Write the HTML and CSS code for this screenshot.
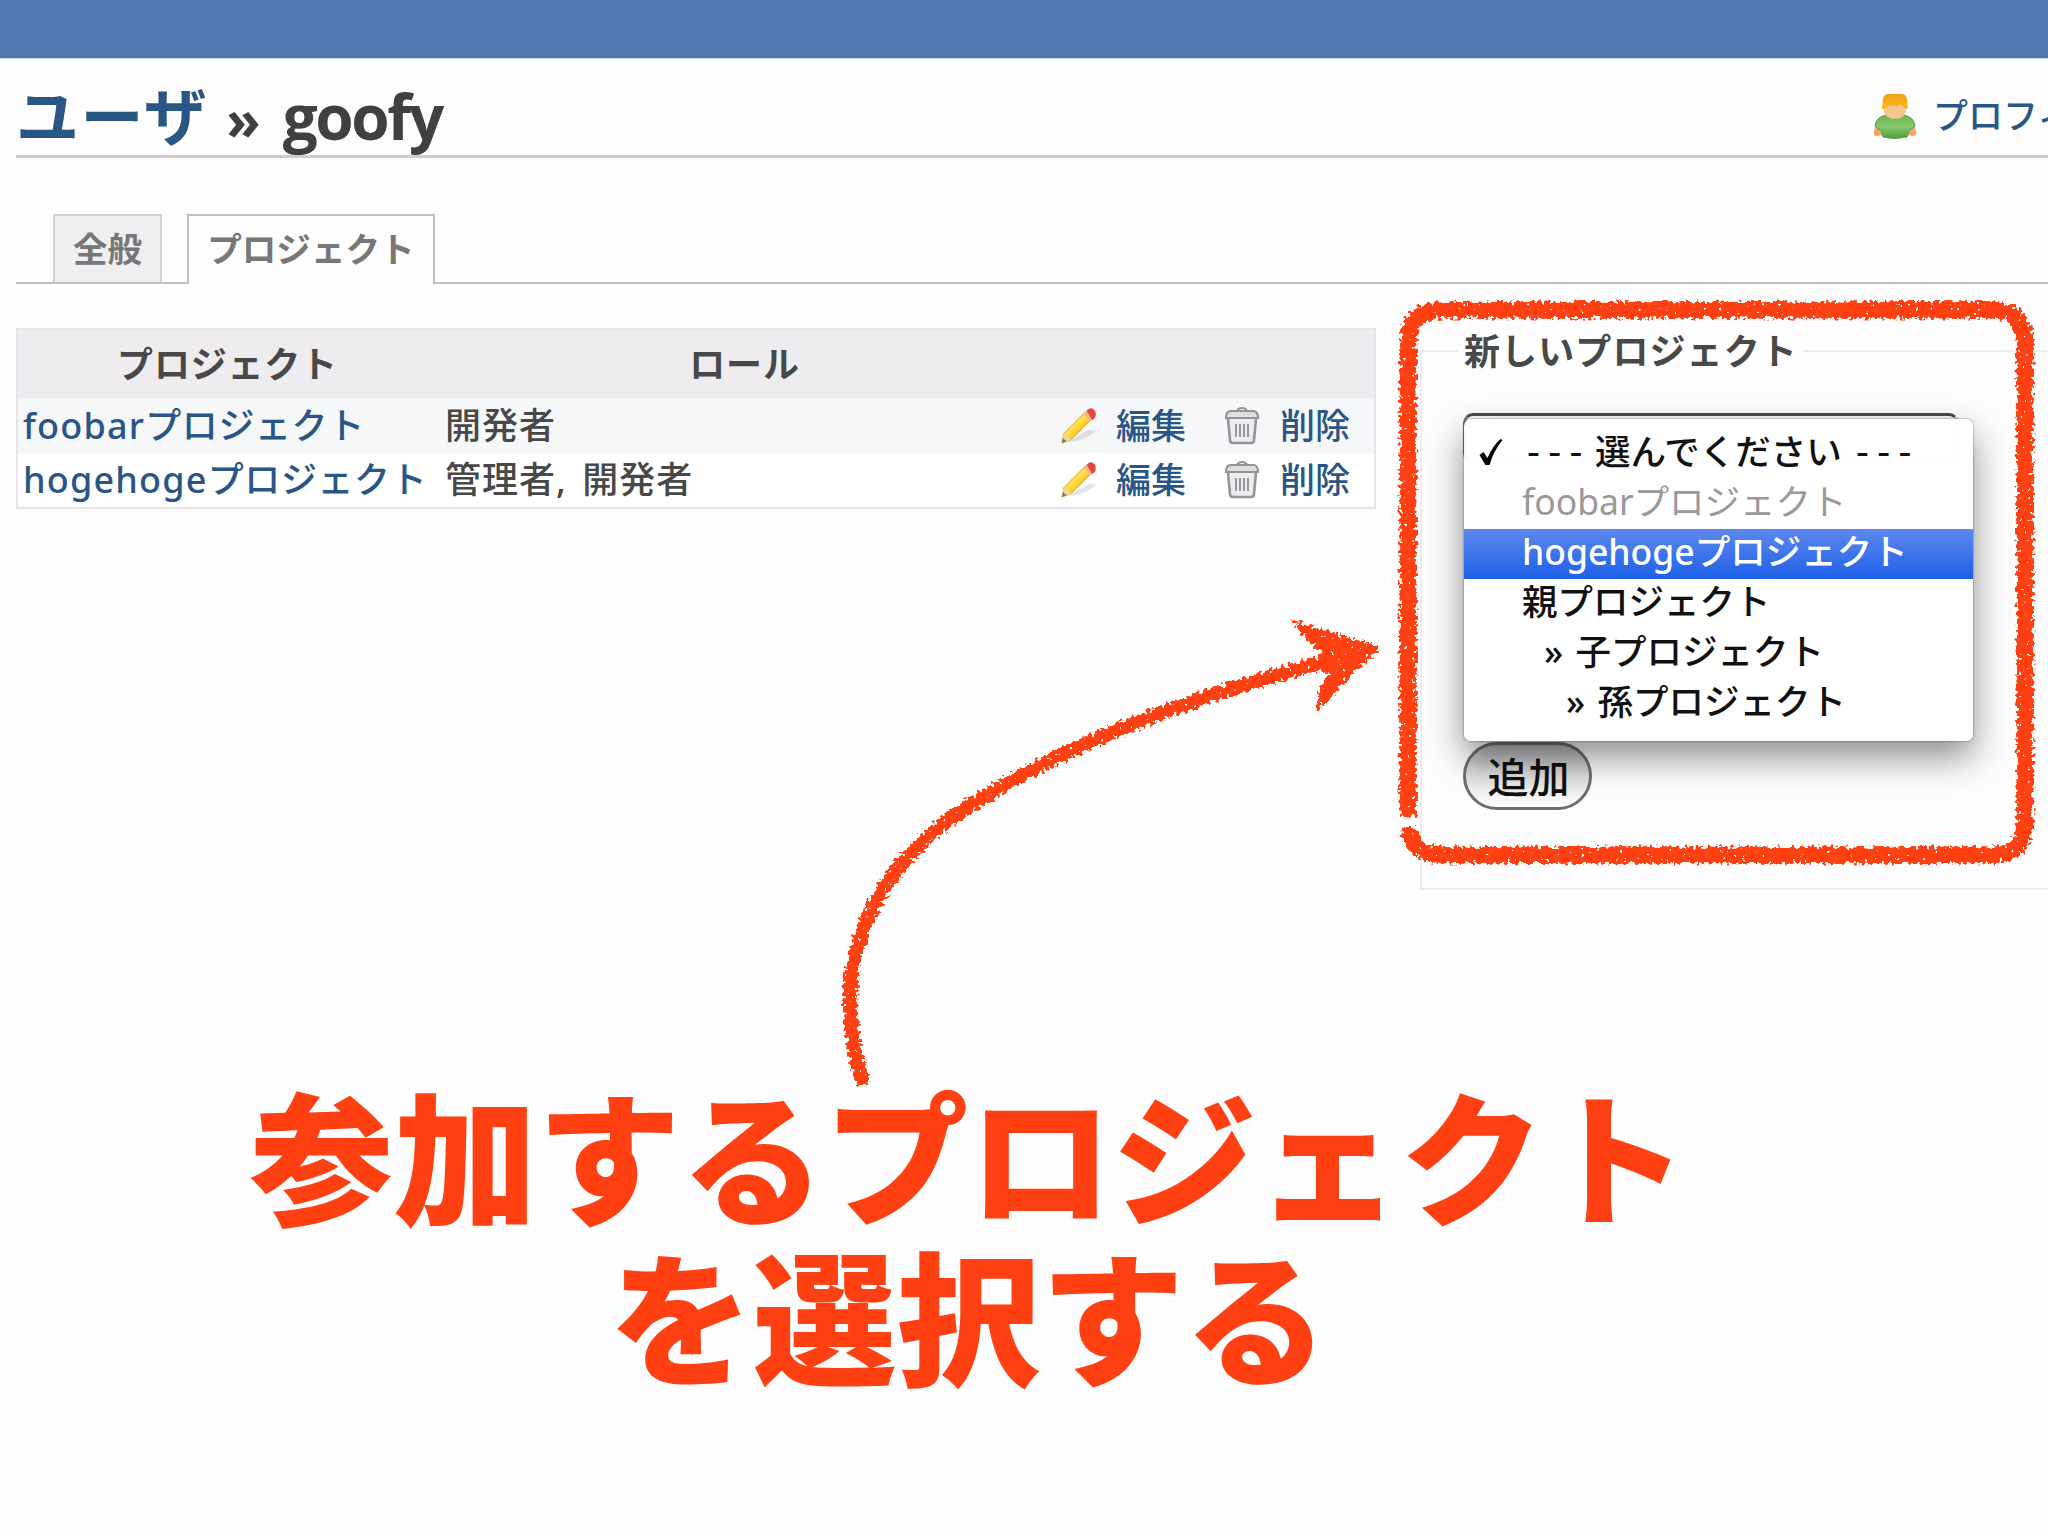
FILE: index.html
```html
<!DOCTYPE html>
<html lang="ja">
<head>
    <meta charset="utf-8">
    <title>ユーザ » goofy</title>
    <link rel="stylesheet" href="styles.css">
</head>
<body>
    <svg class="defs" width="0" height="0">
        <defs>
            <linearGradient id="penBody" x1="0" y1="0" x2="1" y2="1">
                <stop offset="0.2" stop-color="#fff08a"/>
                <stop offset="0.5" stop-color="#ffd93b"/>
                <stop offset="0.8" stop-color="#e89a1c"/>
            </linearGradient>
            <linearGradient id="shirt" x1="0" y1="0" x2="0" y2="1">
                <stop offset="0" stop-color="#6db455"/>
                <stop offset="0.5" stop-color="#86c96c"/>
                <stop offset="1" stop-color="#4f9d3c"/>
            </linearGradient>
            <linearGradient id="hair" x1="0" y1="0" x2="0" y2="1">
                <stop offset="0" stop-color="#f0a020"/>
                <stop offset="1" stop-color="#ffb80c"/>
            </linearGradient>
            <symbol id="pencil" viewBox="0 0 40 40">
                <path d="M8 37 Q24 37 38 25 L30 24 Z" fill="#000" opacity="0.1"/>
                <path d="M2 38 L4 28 L27 5 L34 12 L12 34 Z" fill="url(#penBody)" stroke="#dc9a35" stroke-width="1"/>
                <path d="M2 38 L4 28 L12 34 Z" fill="#e9d9a0"/>
                <path d="M2 38 L3 33 L7 36 Z" fill="#777a50"/>
                <path d="M25 7 L28 4 L36 11 L32 15 Z" fill="#f6b49a"/>
                <path d="M28 4 Q31 0 35 2 Q39 5 37 11 L34 14 Z" fill="#e2483c"/>
            </symbol>
            <symbol id="trash" viewBox="0 0 36 40">
                <path d="M13 4 Q18 0 23 4" fill="none" stroke="#939398" stroke-width="2"/>
                <path d="M4 13 L6 34 Q6 37 9 37 H27 Q30 37 30 34 L32 13" fill="#ececee" stroke="#939398" stroke-width="2.6"/>
                <path d="M2 12 Q2 5 7 5 H29 Q34 5 34 12 Z" fill="#dededf" stroke="#939398" stroke-width="2.2"/>
                <path d="M12 18 V31 M16 18 V31 M20 18 V31 M24 18 V31" stroke="#98989d" stroke-width="2"/>
            </symbol>
            <!-- eats into the stroke edges with noise, clipped to a slightly fattened stroke -->
            <filter id="crayon" filterUnits="userSpaceOnUse" x="0" y="0" width="2048" height="1536" color-interpolation-filters="sRGB">
                <feGaussianBlur in="SourceAlpha" stdDeviation="2.2" result="soft"/>
                <feMorphology in="SourceAlpha" operator="dilate" radius="2" result="limit"/>
                <feTurbulence type="fractalNoise" baseFrequency="0.26" numOctaves="2" seed="7" result="noise"/>
                <feComposite in="soft" in2="noise" operator="arithmetic" k1="0" k2="1" k3="1.8" k4="-1.37" result="mix"/>
                <feComponentTransfer in="mix" result="edge">
                    <feFuncA type="linear" slope="10" intercept="0"/>
                </feComponentTransfer>
                <feComposite in="edge" in2="limit" operator="in" result="grain"/>
                <feFlood flood-color="#ff4013"/>
                <feComposite in2="grain" operator="in"/>
            </filter>
        </defs>
    </svg>

    <div class="top-bar"></div>

    <div class="content">
        <div class="title-row">
            <h2><a href="#">ユーザ</a> <span class="sep">»</span> <span class="login">goofy</span></h2>
            <a href="#" class="profile">
                <svg class="user-icon" viewBox="0 0 46 46">
                    <path d="M3 34 Q0 44 5 43 L11 42 L9 30 Z M43 34 Q46 44 41 43 L35 42 L37 30 Z" fill="#eeaa66"/>
                    <path d="M14 22 Q4 24 3 33 L9 38 L11 44 Q23 47 35 44 L37 38 L43 33 Q42 24 32 22 Z" fill="url(#shirt)" stroke="#569f48" stroke-width="1"/>
                    <path d="M12 12 H34 V19 Q32 26 23 26 Q14 26 12 19 Z" fill="#f3c690"/>
                    <path d="M10 16 L11 5 Q12 1 17 1 H29 Q34 1 35 6 L36 16 L32 15 Q31 12 29 12 Q20 14 15 12 L14 16 Z" fill="url(#hair)"/>
                </svg>
                <span>プロフィール</span>
            </a>
        </div>

        <ul class="tabs">
            <li><a href="#">全般</a></li>
            <li class="selected"><a href="#">プロジェクト</a></li>
        </ul>

        <div class="split">
            <table class="list">
                <thead>
                    <tr>
                        <th class="col-project">プロジェクト</th>
                        <th class="col-roles">ロール</th>
                        <th></th>
                    </tr>
                </thead>
                <tbody>
                    <tr class="odd">
                        <td><a href="#"><span class="latin">foobar</span>プロジェクト</a></td>
                        <td class="roles">開発者</td>
                        <td>
                            <div class="buttons">
                                <a href="#"><svg class="pencil"><use href="#pencil"/></svg>編集</a>
                                <a href="#"><svg class="trash"><use href="#trash"/></svg>削除</a>
                            </div>
                        </td>
                    </tr>
                    <tr>
                        <td><a href="#"><span class="latin">hogehoge</span>プロジェクト</a></td>
                        <td class="roles">管理者, 開発者</td>
                        <td>
                            <div class="buttons">
                                <a href="#"><svg class="pencil"><use href="#pencil"/></svg>編集</a>
                                <a href="#"><svg class="trash"><use href="#trash"/></svg>削除</a>
                            </div>
                        </td>
                    </tr>
                </tbody>
            </table>

            <div class="new-project">
                <div class="legend">新しいプロジェクト</div>
                <div class="select">
                    <div class="menu">
                        <div class="option"><svg class="check" viewBox="0 0 24 28"><path d="M1 17 L5 14 L9 20 Q14 8 22 1 L24 2 Q15 13 11 27 L7 27 Z"/></svg><span class="dashes">---</span> 選んでください <span class="dashes">---</span></div>
                        <div class="option disabled">foobarプロジェクト</div>
                        <div class="option active">hogehogeプロジェクト</div>
                        <div class="option">親プロジェクト</div>
                        <div class="option child">» 子プロジェクト</div>
                        <div class="option grandchild">» 孫プロジェクト</div>
                    </div>
                </div>
                <div class="roles-list">
                    <span class="box"></span>
                    <span class="box"></span>
                    <span class="box"></span>
                </div>
                <button class="add">追加</button>
            </div>
        </div>

        <p class="caption">参加するプロジェクト<br>を選択する</p>
    </div>

    <svg class="marks" viewBox="0 0 2048 1536">
        <g filter="url(#crayon)">
            <path class="stroke" d="M1408 817 V344 Q1408 310 1442 310 H1992 Q2025 310 2025 344 V822 Q2025 855 1992 855 H1442 Q1412 854 1409 828"/>
            <path class="arrow" d="M863 1085 C849 1030 843 985 862 933 C885 868 930 830 977 801 C1070 744 1180 700 1335 659"/>
            <path class="head" d="M1295 623 L1378 648 Q1345 676 1318 709 Q1319 690 1332 673 L1318 667 L1324 652 Q1310 642 1295 623 Z"/>
        </g>
    </svg>
</body>
</html>
```
FILE: styles.css
```css
* {
    box-sizing: border-box;
}

body {
    margin: 0;
    width: 2048px;
    height: 1536px;
    overflow: hidden;
    position: relative;
    background: #fdfdfd;
    color: #484848;
    font-family: "Noto Sans", "Noto Sans CJK JP", sans-serif;
    font-size: 35px;
    font-weight: 500;
    line-height: 54px;
}

a {
    color: #2a5685;
    text-decoration: none;
}

.defs {
    position: absolute;
}

.top-bar {
    height: 59px;
    background: #507aad;
    border-bottom: 1px solid #c5d9e8;
}

.content {
    width: 2048px;
    height: 1477px;
    padding-left: 16px;
    overflow: hidden;
}

/* Title */
.title-row {
    display: flex;
    justify-content: space-between;
    height: 99px;
    overflow: hidden;
    border-bottom: 3px solid #cfcccf;
}

h2 {
    display: flex;
    align-items: baseline;
    margin: 0;
    padding-top: 12px;
    font-family: "Open Sans", "Noto Sans CJK JP", sans-serif;
    font-size: 63px;
    line-height: 90px;
    color: #404040;
}

h2 a {
    letter-spacing: 1.5px;
}

.sep {
    margin-left: 18px;
    font-size: 56px;
}

.login {
    margin-left: 22px;
    font-size: 62px;
    letter-spacing: -2.4px;
}

.profile {
    display: flex;
    align-items: center;
    width: 176px;
    height: 54px;
    margin-top: 30px;
    white-space: nowrap;
}

.user-icon {
    width: 46px;
    height: 46px;
    margin-right: 15px;
    flex: none;
}

/* Tabs */
.tabs {
    display: flex;
    align-items: flex-end;
    height: 126px;
    margin: 0;
    padding: 0 0 0 37px;
    list-style: none;
    border-bottom: 2px solid #c2bec6;
}

.tabs li {
    height: 68px;
    margin-right: 25px;
    padding: 0 18px;
    border: 2px solid #d2d0d4;
    border-bottom: 0;
    background: #efeef1;
    font-size: 34.6px;
    line-height: 66px;
    font-weight: bold;
}

.tabs a {
    color: #777;
}

.tabs .selected {
    height: 70px;
    margin-bottom: -2px;
    border-color: #c2bec6;
    background: #fdfdfd;
}

/* Memberships */
.split {
    display: flex;
    align-items: flex-start;
    height: 606px;
    padding-top: 44px;
}

.list {
    flex: none;
    width: 1360px;
    border: 2px solid #e7e5ea;
    border-collapse: collapse;
    table-layout: fixed;
    background: #fff;
}

.list th {
    height: 69px;
    padding: 2px 0 0;
    background: #eeecee;
    font-size: 36px;
    letter-spacing: 0.8px;
}

.col-project {
    width: 420px;
}

.col-roles {
    width: 615px;
}

.list td {
    height: 55px;
    padding: 0 0 0 5px;
    font-size: 36px;
    letter-spacing: 0.6px;
    white-space: nowrap;
}

.list .roles {
    padding-left: 8px;
    letter-spacing: 1px;
    word-spacing: 5px;
}

.list .odd {
    background: #f6f7f8;
}

.latin {
    letter-spacing: 1.2px;
}

.buttons {
    display: flex;
    gap: 38px;
    padding-left: 3px;
    font-size: 35px;
    letter-spacing: 0;
}

.buttons a {
    display: flex;
    align-items: center;
}

.pencil {
    width: 38px;
    height: 40px;
    margin-right: 18px;
}

.trash {
    width: 36px;
    height: 40px;
    margin-right: 20px;
}

/* New membership box */
.new-project {
    flex: none;
    width: 760px;
    height: 540px;
    margin: 22px 0 0 44px;
    padding-left: 41px;
    border: 2px solid #ececef;
}

.legend {
    width: 346px;
    margin: -27px 0 0 -5px;
    padding-left: 6px;
    background: #fdfdfd;
    font-size: 36px;
    font-weight: bold;
    letter-spacing: 1.1px;
}

.select {
    position: relative;
    width: 496px;
    height: 50px;
    margin-top: 34px;
    border: 3px solid #555;
    border-color: #4a4a4e #ccc #ccc #777;
    border-radius: 10px;
}

.menu {
    position: absolute;
    top: 3px;
    left: -2px;
    width: 509px;
    height: 322px;
    padding-top: 10px;
    border-radius: 7px;
    background: rgba(255, 255, 255, 0.95);
    box-shadow: 0 0 2px rgba(0, 0, 0, 0.6), 0 16px 36px rgba(0, 0, 0, 0.45);
}

.option {
    position: relative;
    height: 50px;
    padding-left: 58px;
    font-size: 35.5px;
    line-height: 44px;
    color: #111;
    white-space: nowrap;
}

.check {
    position: absolute;
    left: 14px;
    top: 9px;
    width: 25px;
    height: 28px;
}

.dashes {
    font-family: "DejaVu Sans Mono", monospace;
    font-size: 38px;
    line-height: 0;
    letter-spacing: -1.6px;
}

.disabled {
    color: #999;
    font-weight: 400;
}

.active {
    background: linear-gradient(#5f88ef, #1c60e8);
    color: #fff;
}

.child {
    padding-left: 80px;
    word-spacing: 3px;
}

.grandchild {
    padding-left: 102px;
    word-spacing: 3px;
}

.roles-list {
    display: flex;
    flex-direction: column;
    gap: 25px;
    height: 279px;
    padding: 54px 0 0 6px;
}

.box {
    width: 32px;
    height: 32px;
    border: 2px solid #ccc;
    border-radius: 4px;
}

.add {
    display: block;
    width: 129px;
    height: 68px;
    padding: 1px 0 0 2px;
    border: 3px solid #6e6e70;
    border-radius: 34px;
    background: linear-gradient(#b5b4b6, #dededf 50%, #fff);
    font-family: inherit;
    font-size: 41px;
    font-weight: 500;
    line-height: 60px;
    color: #111;
}

/* Callout */
.caption {
    width: 1905px;
    margin: 182px 0 0;
    font-family: "Noto Sans CJK JP", sans-serif;
    font-size: 143.8px;
    font-weight: 900;
    line-height: 160px;
    color: #ff4013;
    text-align: center;
}

.marks {
    position: absolute;
    top: 0;
    left: 0;
    width: 2048px;
    height: 1536px;
    pointer-events: none;
}

.stroke {
    fill: none;
    stroke: #ff4013;
    stroke-width: 17;
}

.arrow {
    fill: none;
    stroke: #ff4013;
    stroke-width: 14;
}

.head {
    fill: #ff4013;
    stroke: #ff4013;
    stroke-width: 4;
}
```
